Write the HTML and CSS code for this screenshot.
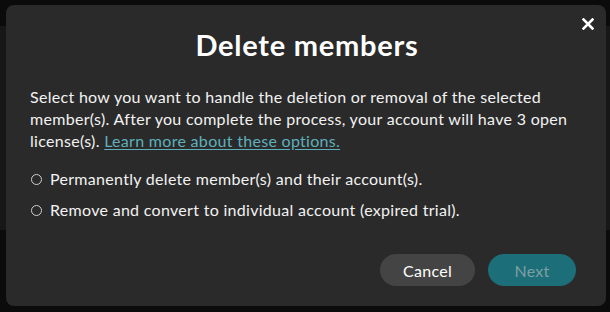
FILE: index.html
```html
<!DOCTYPE html>
<html lang="en">
<head>
<meta charset="utf-8">
<title>Delete members</title>
<link rel="stylesheet" href="styles.css">
</head>
<body>
<div class="modal" role="dialog" aria-labelledby="dlg-title">
  <button class="close" aria-label="Close">
    <svg width="12" height="12" viewBox="0 0 12 12" aria-hidden="true"><path d="M1.5 1.5 L10.5 10.5 M10.5 1.5 L1.5 10.5" stroke="#fff" stroke-width="2.6" stroke-linecap="square"/></svg>
  </button>
  <h1 id="dlg-title" class="title">Delete members</h1>
  <p class="desc">Select how you want to handle the deletion or removal of the selected member(s). After you complete the process, your account will have 3 open license(s). <a href="#" class="link">Learn more about these options.</a></p>
  <div class="options">
    <label class="option"><span class="radio"></span>Permanently delete member(s) and their account(s).</label>
    <label class="option"><span class="radio"></span>Remove and convert to individual account (expired trial).</label>
  </div>
  <div class="actions">
    <button class="btn btn-cancel">Cancel</button>
    <button class="btn btn-next" disabled>Next</button>
  </div>
</div>
</body>
</html>
```
FILE: styles.css
```css
html, body {
  margin: 0;
  height: 100%;
}
body {
  background: linear-gradient(to bottom, #0b0b0b 0, #0b0b0b 26px, #171717 26px, #171717 230px, #0b0b0b 230px);
  padding: 5px 4px 0 6px;
  box-sizing: border-box;
  font-family: Lato, "Open Sans", sans-serif;
  color: #fff;
}
.modal {
  position: relative;
  width: 600px;
  height: 301px;
  box-sizing: border-box;
  background: #2a2a2a;
  border-radius: 8px;
  padding: 23px 30px 20px 24px;
  display: flex;
  flex-direction: column;
}
.close {
  position: absolute;
  top: 9px;
  right: 8px;
  width: 20px;
  height: 20px;
  padding: 0;
  border: 0;
  background: none;
  display: flex;
  align-items: center;
  justify-content: center;
}
.title {
  margin: 0 0 24px 8px;
  font-size: 29px;
  line-height: 34px;
  font-weight: 700;
  text-align: center;
  letter-spacing: 0.75px;
}
.desc {
  margin: 0 0 16px 0;
  font-size: 16px;
  line-height: 22px;
  letter-spacing: 0.3px;
  color: #f2f2f2;
}
.link {
  color: #5fb0bb;
  text-decoration: underline;
  text-underline-offset: 2px;
}
.options {
  display: flex;
  flex-direction: column;
  gap: 9px;
}
.option {
  display: flex;
  align-items: center;
  font-size: 16px;
  line-height: 22px;
  letter-spacing: 0.3px;
  color: #f2f2f2;
}
.radio {
  width: 9px;
  height: 9px;
  border: 1.3px solid #cfcfcf;
  border-radius: 50%;
  margin: 0 8px 0 1px;
  flex: none;
}
.actions {
  margin-top: auto;
  display: flex;
  justify-content: flex-end;
  gap: 13px;
}
.btn {
  height: 32px;
  border: 0;
  border-radius: 16px;
  font-family: Lato, "Open Sans", sans-serif;
  font-size: 16px;
  letter-spacing: 0.3px;
  padding: 0;
}
.btn-cancel {
  width: 95px;
  background: #444444;
  color: #fff;
}
.btn-next {
  width: 88px;
  background: #1c6e79;
  color: #7f9ea2;
}
```
